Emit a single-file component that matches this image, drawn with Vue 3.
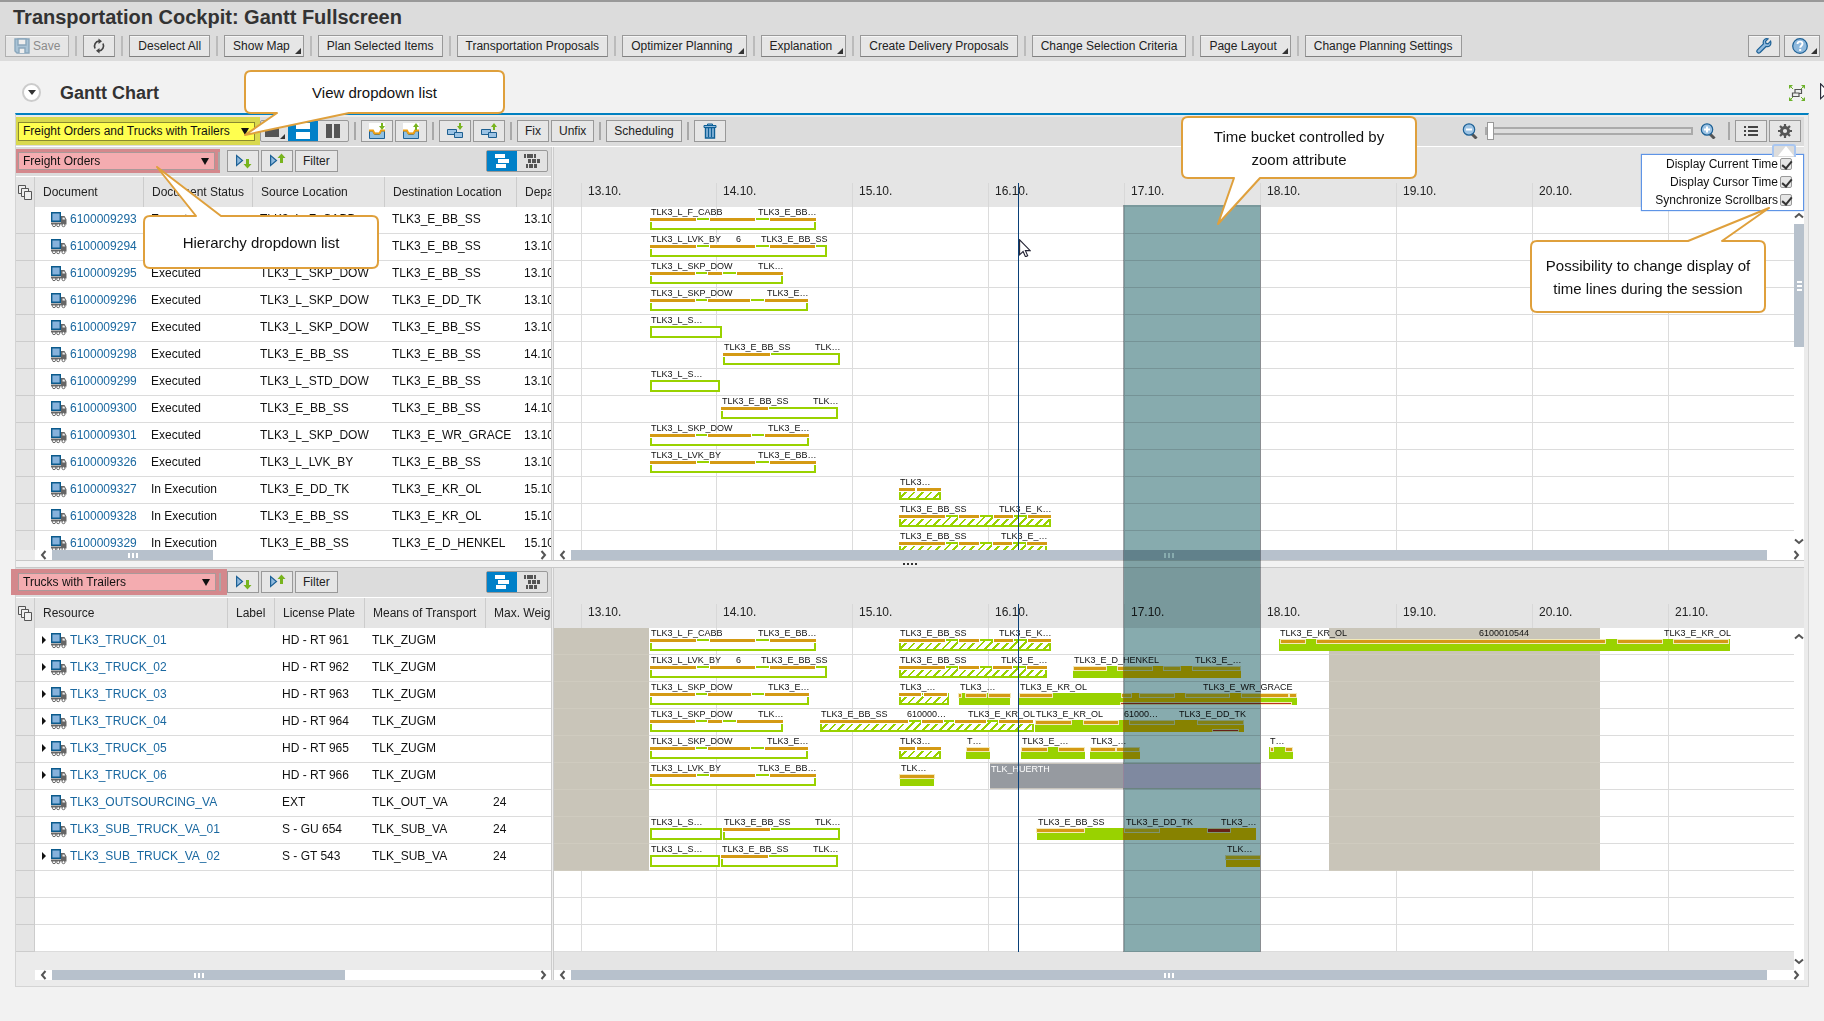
<script setup>
import { h, ref } from 'vue'

const glyphs = {
  save: '<g fill="none" stroke="#8aa7bc" stroke-width="1.4"><path d="M1 1h14v14H3l-2-2z" fill="#a9c3d6"/><path d="M4 1v6h8V1z" fill="#eee"/><path d="M5 15v-5h6v5" fill="#eee"/></g>',
  refresh: '<g fill="none" stroke="#444" stroke-width="1.7"><path d="M4 10.500A4.600 5 0 0 1 8 3.200"/><path d="M12 5.500A4.600 5 0 0 1 8 12.800"/></g><path d="M7.500 .500v5.500l3.500-2.700zM8.500 10v5.500L5 12.800z" fill="#444"/>',
  wrench: '<path d="M14.600 3.200l-2.600 2.600-2-.400-.500-2L12 .900C9.500 0 7 1.800 7.200 4.600l.2 1.200-6 6c-1.600 1.800.6 4.300 2.700 2.700l6-6c3 .900 5.600-1.600 4.500-5.300z" fill="#8fb9dd" stroke="#1d6196" stroke-width="1.200"/>',
  help: '<circle cx="8" cy="8" r="7.300" fill="#8fb9dd" stroke="#1d6196" stroke-width="1.200"/><path d="M5.500 6c.2-3.200 5-3 5-.2 0 1.900-2.300 1.900-2.300 4" fill="none" stroke="#fff" stroke-width="1.900"/><path d="M7.200 11h2v2h-2z" fill="#fff"/>',
  restore: '<g fill="none" stroke="#555" stroke-width="1.200"><path d="M6 4.500h6.500v4H6z" fill="#eee"/><path d="M3.500 8H10v3.500H3.500z" fill="#eee"/></g><path d="M0 0h4L0 4zM16 0v4l-4-4zM0 16v-4l4 4zM16 16h-4l4-4z" fill="#6cb22a"/><path d="M1 1l3 3M15 1l-3 3M1 15l3-3M15 15l-3-3" stroke="#6cb22a"/>',
  single: '<path d="M0 2h14v12H0z" fill="#555"/><path d="M20 16h-5l5-5z" fill="#333"/>',
  rows: '<path d="M1 0h14v6H1zM1 9h14v7H1z" fill="#fff"/>',
  cols: '<path d="M1 1h6v14H1zM9 1h6v14H9z" fill="#555"/>',
  trayin: '<path d="M0 0h16v9H0z" fill="#fff"/><path d="M.5 8v7.500h15V8h-3l-2 3.500h-5L3.500 8z" fill="#8fc0e2" stroke="#1d6196"/><path d="M0 7.500h4l1.500 3h5l1.500-3h4" fill="none" stroke="#f0a010" stroke-width="2"/><path d="M12 0h2v3h2l-3 4-3-4h2z" fill="#78b41e"/>',
  trayout: '<path d="M0 0h16v9H0z" fill="#fff"/><path d="M.5 8v7.500h15V8h-3l-2 3.500h-5L3.500 8z" fill="#8fc0e2" stroke="#1d6196"/><path d="M0 7.500h4l1.500 3h5l1.500-3h4" fill="none" stroke="#f0a010" stroke-width="2"/><path d="M12 7h2V4h2l-3-4-3 4h2z" fill="#78b41e"/>',
  linkin: '<path d="M.5 6.500h9v5h-9z" fill="#9cc3e4" stroke="#1d5f90"/><path d="M7.500 9.500h8v5h-8z" fill="#9cc3e4" stroke="#1d5f90"/><path d="M12 0h2v3h2l-3 4-3-4h2z" fill="#78b41e"/>',
  linkout: '<path d="M.5 6.500h9v5h-9z" fill="#9cc3e4" stroke="#1d5f90"/><path d="M7.500 9.500h8v5h-8z" fill="#9cc3e4" stroke="#1d5f90"/><path d="M12 7h2V4h2l-3-4-3 4h2z" fill="#78b41e"/>',
  trash: '<path d="M3.500 4.500h9V15h-9z" fill="#8fb9dd" stroke="#0d5f95" stroke-width="1.400"/><path d="M2 2.500h12v2H2zM5.500 1h5v1.500h-5z" fill="#8fb9dd" stroke="#0d5f95"/><path d="M6.500 5v9M9.500 5v9" stroke="#0d5f95" stroke-width="1.300"/>',
  zoomout: '<path d="M9.500 10.500l5 5" stroke="#555" stroke-width="3"/><circle cx="7" cy="6.500" r="5.700" fill="#9cc3e4" stroke="#1d6196" stroke-width="1.200"/><path d="M4 5.500h6v2H4z" fill="#fff"/>',
  zoomin: '<path d="M9.500 10.500l5 5" stroke="#555" stroke-width="3"/><circle cx="7" cy="6.500" r="5.700" fill="#9cc3e4" stroke="#1d6196" stroke-width="1.200"/><path d="M4 5.500h6v2H4zM6 3.500h2v6H6z" fill="#fff"/>',
  list: '<path d="M1 3h2v2H1zM5 3h10v2H5zM1 7h2v2H1zM5 7h10v2H5zM1 11h2v2H1zM5 11h10v2H5z" fill="#444"/>',
  gear: '<circle cx="8" cy="8" r="3.600" fill="none" stroke="#555" stroke-width="3"/><path d="M8 1v3M8 12v3M1 8h3M12 8h3M3 3l2.300 2.300M10.700 10.700L13 13M13 3l-2.300 2.300M5.300 10.700L3 13" stroke="#555" stroke-width="2.200"/>',
  expand: '<path d="M1.600 2.500v10L7.500 7.500z" fill="#8fb9dd" stroke="#1d6196" stroke-width="1.200"/><path d="M11 6h3v5h2.500l-4 4.500L8.500 11H11z" fill="#78b41e"/>',
  collapse: '<path d="M1.600 2.500v10L7.500 7.500z" fill="#8fb9dd" stroke="#1d6196" stroke-width="1.200"/><path d="M11 10h3V5h2.500l-4-4.500L8.500 5H11z" fill="#78b41e"/>',
  stagger: '<path d="M1 1h10v4H1zM4 6h11v4H4zM2 11h10v4H2z" fill="#fff"/>',
  brick: '<path d="M0 1h2v4H0zM3 1h6v4H3zM10 1h2v4h-2zM4 6h3v4H4zM8 6h4v4H8zM13 6h3v4h-3zM2 11h2v4H2zM5 11h4v4H5zM10 11h3v4h-3z" fill="#555"/>',
  copies: '<g fill="#eee" stroke="#555"><path d="M1.500 1.500h7v8h-7z"/><path d="M4.500 4.500h7v8h-7z"/><path d="M7.500 7.500h7v8h-7z"/></g>',
  truck: '<path d="M.7.700h8.600v8.600H.7z" fill="#86b2dc" stroke="#0b5a8c" stroke-width="1.400"/><path d="M0 10.500h10V4h3.500L15.500 7.500V12.500H0z" fill="#666"/><path d="M11.500 5.500h1.800l1 2h-2.800z" fill="#eee"/><g fill="#fff" stroke="#666"><circle cx="3" cy="13.200" r="1.500"/><circle cx="7.200" cy="13.200" r="1.500"/><circle cx="12.500" cy="13.200" r="1.500"/></g>',
  left: '<path d="M6.500 1L3 5l3.500 4" fill="none" stroke="#555" stroke-width="2"/>',
  right: '<path d="M3.500 1L7 5 3.500 9" fill="none" stroke="#555" stroke-width="2"/>',
  up: '<path d="M1 6.500L5 3l4 3.500" fill="none" stroke="#555" stroke-width="2"/>',
  down: '<path d="M1 3.500L5 7l4-3.500" fill="none" stroke="#555" stroke-width="2"/>',
  pointer: '<path d="M.6.800v15l3.500-3.300 2.400 5.300 2.200-1-2.300-5.200h4.800z" fill="#fff" stroke="#223" stroke-width="1.100"/>'
}
const Icon = (p) =>
  h('svg', { viewBox: `0 0 ${p.w || 16} ${p.t || 16}`, width: p.w || 16, height: p.t || 16, innerHTML: glyphs[p.name], 'aria-hidden': 'true' })
Icon.props = ['name', 'w', 't']

const actions = [
  { label: 'Deselect All' },
  { label: 'Show Map', menu: true },
  { label: 'Plan Selected Items' },
  { label: 'Transportation Proposals' },
  { label: 'Optimizer Planning', menu: true },
  { label: 'Explanation', menu: true },
  { label: 'Create Delivery Proposals' },
  { label: 'Change Selection Criteria' },
  { label: 'Page Layout', menu: true },
  { label: 'Change Planning Settings' }
]

const zoom = ref(0)
const options = ref([
  { id: 'opt-current', label: 'Display Current Time', on: true },
  { id: 'opt-cursor', label: 'Display Cursor Time', on: true },
  { id: 'opt-sync', label: 'Synchronize Scrollbars', on: true }
])

const days = ['13.10.', '14.10.', '15.10.', '16.10.', '17.10.', '18.10.', '19.10.', '20.10.', '21.10.'].map((label, i) => ({
  label,
  x: Math.floor(27 + i * 135.9)
}))

// A bar: start, width, fill kind, activity segments, captions, optional overload line
const bar = (x, w, kind, segs, texts, extra = {}) => ({ x, w, kind, segs, texts, ...extra })
const cabb = bar(96, 166, 'open', [[0, 46], [60, 105], [120, 166]], [[1, 'TLK3_L_F_CABB'], [108, 'TLK3_E_BB…']])
const lvkLong = bar(96, 177, 'open', [[0, 46], [60, 105], [120, 165]], [[1, 'TLK3_L_LVK_BY'], [86, '6'], [111, 'TLK3_E_BB_SS']])
const skpShort = bar(96, 133, 'open', [[0, 45], [58, 72], [87, 133]], [[1, 'TLK3_L_SKP_DOW'], [108, 'TLK…']])
const skpTk = bar(96, 158, 'open', [[0, 45], [58, 100], [115, 158]], [[1, 'TLK3_L_SKP_DOW'], [117, 'TLK3_E…']])
const plainA = bar(96, 72, 'open', [], [[1, 'TLK3_L_S…']])
const returnA = bar(169, 117, 'open', [[0, 47]], [[1, 'TLK3_E_BB_SS'], [92, 'TLK…']])
const plainB = bar(96, 70, 'open', [], [[1, 'TLK3_L_S…']])
const returnB = bar(167, 117, 'open', [[0, 47]], [[1, 'TLK3_E_BB_SS'], [92, 'TLK…']])
const grace = bar(96, 159, 'open', [[0, 45], [58, 101], [115, 159]], [[1, 'TLK3_L_SKP_DOW'], [118, 'TLK3_E…']])
const lvk = bar(96, 166, 'open', [[0, 46], [60, 105], [120, 166]], [[1, 'TLK3_L_LVK_BY'], [108, 'TLK3_E_BB…']])
const short27 = bar(345, 42, 'hatch', [[0, 16], [18, 42]], [[1, 'TLK3…']])
const hatch28 = bar(345, 152, 'hatch', [[0, 46], [60, 80], [95, 114], [129, 152]], [[1, 'TLK3_E_BB_SS'], [100, 'TLK3_E_K…']])
const hatch29 = bar(345, 148, 'hatch', [[0, 46], [60, 80], [94, 113], [128, 148]], [[1, 'TLK3_E_BB_SS'], [102, 'TLK3_E_…']])

const order = (id, status, from, to, dep, bars) => ({ name: id, cells: [status, from, to, dep], bars })
const truck = (name, plate, means, weight, open, bars) => ({ name, cells: ['', plate, means, weight], open, bars })
const blank = () => ({ name: '', cells: ['', '', '', ''], bars: [] })

const panes = [
  {
    id: 'orders',
    title: 'Freight Orders',
    cols: [109, 109, 132, 132, 120],
    heads: ['Document', 'Document Status', 'Source Location', 'Destination Location', 'Departure'],
    offdays: [],
    rows: [
      order('6100009293', 'Executed', 'TLK3_L_F_CABB', 'TLK3_E_BB_SS', '13.10.', [cabb]),
      order('6100009294', 'Executed', 'TLK3_L_LVK_BY', 'TLK3_E_BB_SS', '13.10.', [lvkLong]),
      order('6100009295', 'Executed', 'TLK3_L_SKP_DOW', 'TLK3_E_BB_SS', '13.10.', [skpShort]),
      order('6100009296', 'Executed', 'TLK3_L_SKP_DOW', 'TLK3_E_DD_TK', '13.10.', [skpTk]),
      order('6100009297', 'Executed', 'TLK3_L_SKP_DOW', 'TLK3_E_BB_SS', '13.10.', [plainA]),
      order('6100009298', 'Executed', 'TLK3_E_BB_SS', 'TLK3_E_BB_SS', '14.10.', [returnA]),
      order('6100009299', 'Executed', 'TLK3_L_STD_DOW', 'TLK3_E_BB_SS', '13.10.', [plainB]),
      order('6100009300', 'Executed', 'TLK3_E_BB_SS', 'TLK3_E_BB_SS', '14.10.', [returnB]),
      order('6100009301', 'Executed', 'TLK3_L_SKP_DOW', 'TLK3_E_WR_GRACE', '13.10.', [grace]),
      order('6100009326', 'Executed', 'TLK3_L_LVK_BY', 'TLK3_E_BB_SS', '13.10.', [lvk]),
      order('6100009327', 'In Execution', 'TLK3_E_DD_TK', 'TLK3_E_KR_OL', '15.10.', [short27]),
      order('6100009328', 'In Execution', 'TLK3_E_BB_SS', 'TLK3_E_KR_OL', '15.10.', [hatch28]),
      order('6100009329', 'In Execution', 'TLK3_E_BB_SS', 'TLK3_E_D_HENKEL', '15.10.', [hatch29])
    ]
  },
  {
    id: 'trucks',
    title: 'Trucks with Trailers',
    cols: [193, 47, 90, 121, 151],
    heads: ['Resource', 'Label', 'License Plate', 'Means of Transport', 'Max. Weight'],
    offdays: [[0, 95], [775, 271]],
    rows: [
      truck('TLK3_TRUCK_01', 'HD - RT 961', 'TLK_ZUGM', '', true, [
        cabb,
        hatch28,
        bar(725, 451, 'full', [[2, 26], [38, 326], [339, 383], [395, 449]], [[1, 'TLK3_E_KR_OL'], [200, '6100010544'], [385, 'TLK3_E_KR_OL']])
      ]),
      truck('TLK3_TRUCK_02', 'HD - RT 962', 'TLK_ZUGM', '', true, [
        lvkLong,
        hatch29,
        bar(519, 168, 'full', [[1, 33], [45, 79], [91, 107], [120, 167]], [[1, 'TLK3_E_D_HENKEL'], [122, 'TLK3_E_…']])
      ]),
      truck('TLK3_TRUCK_03', 'HD - RT 963', 'TLK_ZUGM', '', true, [
        grace,
        bar(345, 50, 'hatch', [[0, 22], [25, 48]], [[1, 'TLK3_…']]),
        bar(405, 51, 'full', [[0, 2], [7, 27], [30, 51]], [[1, 'TLK3_…']]),
        bar(465, 278, 'full', [[1, 33], [103, 112], [121, 155], [167, 210], [223, 269], [271, 277]], [[1, 'TLK3_E_KR_OL'], [184, 'TLK3_E_WR_GRACE']], { over: [102, 272] })
      ]),
      truck('TLK3_TRUCK_04', 'HD - RT 964', 'TLK_ZUGM', '', true, [
        skpShort,
        bar(266, 214, 'hatch', [[0, 88], [102, 123], [135, 166], [179, 213]], [[1, 'TLK3_E_BB_SS'], [87, '610000…'], [148, 'TLK3_E_KR_OL']]),
        bar(481, 209, 'full', [[1, 36], [49, 83], [95, 139], [163, 208]], [[1, 'TLK3_E_KR_OL'], [89, '61000…'], [144, 'TLK3_E_DD_TK']], { over: [178, 203] })
      ]),
      truck('TLK3_TRUCK_05', 'HD - RT 965', 'TLK_ZUGM', '', true, [
        skpTk,
        short27,
        bar(412, 24, 'full', [[1, 23]], [[1, 'T…']]),
        bar(467, 64, 'full', [[1, 26], [38, 63]], [[1, 'TLK3_E_…']]),
        bar(536, 50, 'full', [[1, 25], [27, 49]], [[1, 'TLK3_…']]),
        bar(715, 24, 'full', [[2, 4], [17, 23]], [[1, 'T…']])
      ]),
      truck('TLK3_TRUCK_06', 'HD - RT 966', 'TLK_ZUGM', '', true, [
        lvk,
        bar(346, 34, 'full', [[0, 34]], [[1, 'TLK…']]),
        bar(436, 271, 'block', [], [[1, 'TLK_HUERTH']])
      ]),
      truck('TLK3_OUTSOURCING_VA', 'EXT', 'TLK_OUT_VA', '24', false, []),
      truck('TLK3_SUB_TRUCK_VA_01', 'S - GU 654', 'TLK_SUB_VA', '24', false, [
        plainA,
        returnA,
        bar(483, 219, 'full', [[0, 47], [88, 122], [171, 193, 'late']], [[1, 'TLK3_E_BB_SS'], [89, 'TLK3_E_DD_TK'], [184, 'TLK3_…']])
      ]),
      truck('TLK3_SUB_TRUCK_VA_02', 'S - GT 543', 'TLK_SUB_VA', '24', true, [
        plainB,
        returnB,
        bar(672, 34, 'full', [[0, 34]], [[1, 'TLK…']])
      ]),
      blank(),
      blank(),
      blank()
    ]
  }
]

// Outline of a rounded box with a pointed tail on its top or bottom edge
function balloon(w, t, side, a, b, tip) {
  const r = 6
  const top = side === 'top' ? `L${a} 0L${tip[0]} ${tip[1]}L${b} 0` : ''
  const bottom = side === 'bottom' ? `L${b} ${t}L${tip[0]} ${tip[1]}L${a} ${t}` : ''
  return `M${r} 0${top}H${w - r}Q${w} 0 ${w} ${r}V${t - r}Q${w} ${t} ${w - r} ${t}${bottom}H${r}Q0 ${t} 0 ${t - r}V${r}Q0 0 ${r} 0Z`
}
const callouts = [
  { id: 'view', lines: ['View dropdown list'], w: 259, t: 42, path: balloon(259, 42, 'bottom', 32, 104, [0, 64]) },
  { id: 'hierarchy', lines: ['Hierarchy dropdown list'], w: 234, t: 52, path: balloon(234, 52, 'top', 52, 77, [13, -49]) },
  { id: 'bucket', lines: ['Time bucket controlled by', 'zoom attribute'], w: 234, t: 61, path: balloon(234, 61, 'bottom', 52, 78, [36, 107]) },
  { id: 'options', lines: ['Possibility to change display of', 'time lines during the session'], w: 234, t: 71, path: balloon(234, 71, 'top', 157, 191, [238, -33]) }
]
</script>

<template>
  <div class="page">
    <header class="top">
      <h1>Transportation Cockpit: Gantt Fullscreen</h1>
      <div class="actions">
        <button class="btn save" disabled><Icon name="save" />Save</button>
        <i class="sep"></i>
        <button class="btn icon" aria-label="Refresh"><Icon name="refresh" /></button>
        <template v-for="a in actions" :key="a.label">
          <i class="sep"></i>
          <button class="btn" :class="{ menu: a.menu }">{{ a.label }}</button>
        </template>
        <span class="grow"></span>
        <div class="tools">
          <button class="btn icon" aria-label="Personalize"><Icon name="wrench" /></button>
          <button class="btn icon menu helpbtn" aria-label="Help"><Icon name="help" /></button>
        </div>
      </div>
    </header>

    <main>
      <div class="section-head">
        <button class="fold" aria-label="Collapse section"></button>
        <h2>Gantt Chart</h2>
        <span class="grow"></span>
        <button class="bare" aria-label="Restore size"><Icon name="restore" /></button>
      </div>

      <section class="panel">
        <div class="toolbar">
          <div class="view-mark">
            <span class="drop">
              <select aria-label="View"><option>Freight Orders and Trucks with Trailers</option></select>
            </span>
          </div>
          <div class="group views">
            <button aria-label="Single view"><Icon name="single" :w="20" /></button>
            <button class="on" aria-label="Stacked view"><Icon name="rows" /></button>
            <button aria-label="Side by side view"><Icon name="cols" /></button>
          </div>
          <i class="sep"></i>
          <div class="pair">
            <button class="btn icon" aria-label="Load"><Icon name="trayin" /></button>
            <button class="btn icon" aria-label="Unload"><Icon name="trayout" /></button>
          </div>
          <i class="sep"></i>
          <div class="pair">
            <button class="btn icon" aria-label="Assign"><Icon name="linkin" /></button>
            <button class="btn icon" aria-label="Unassign"><Icon name="linkout" /></button>
          </div>
          <i class="sep"></i>
          <div class="pair">
            <button class="btn">Fix</button>
            <button class="btn">Unfix</button>
          </div>
          <i class="sep"></i>
          <button class="btn">Scheduling</button>
          <i class="sep"></i>
          <button class="btn icon" aria-label="Delete"><Icon name="trash" /></button>
          <span class="grow"></span>
          <div class="zoomer">
            <button class="bare" aria-label="Zoom out"><Icon name="zoomout" /></button>
            <input v-model="zoom" class="zoom" type="range" min="0" max="100" aria-label="Zoom" />
            <button class="bare" aria-label="Zoom in"><Icon name="zoomin" /></button>
          </div>
          <i class="sep"></i>
          <div class="pair">
            <button class="btn icon" aria-label="Legend"><Icon name="list" /></button>
            <button class="btn icon" aria-label="Settings"><Icon name="gear" /></button>
          </div>
          <div class="popup">
            <div v-for="o in options" :key="o.id" class="opt">
              <label :for="o.id">{{ o.label }}</label>
              <input :id="o.id" v-model="o.on" type="checkbox" />
            </div>
          </div>
        </div>

        <div class="stack">
          <template v-for="(p, pi) in panes" :key="p.id">
            <div v-if="pi" class="splitter"><i></i><i></i><i></i><i></i></div>
            <div class="pane" :class="p.id">
              <div class="side">
                <div class="toolbar slim">
                  <div class="hier-mark">
                    <span class="drop">
                      <select :aria-label="'Hierarchy ' + (pi + 1)"><option>{{ p.title }}</option></select>
                    </span>
                    <i class="sep"></i>
                  </div>
                  <div class="pair">
                    <button class="btn icon" aria-label="Expand all"><Icon name="expand" :w="17" /></button>
                    <button class="btn icon" aria-label="Collapse all"><Icon name="collapse" :w="17" /></button>
                    <button class="btn">Filter</button>
                  </div>
                  <span class="grow"></span>
                  <div class="group">
                    <button class="on" aria-label="Staggered rows"><Icon name="stagger" /></button>
                    <button aria-label="Compact rows"><Icon name="brick" /></button>
                  </div>
                </div>
                <div class="grid">
                  <table>
                    <colgroup>
                      <col class="mark-col" />
                      <col v-for="(c, i) in p.cols" :key="i" :style="{ width: c + 'px' }" />
                    </colgroup>
                    <thead>
                      <tr>
                        <th class="mark"><Icon name="copies" /></th>
                        <th v-for="t in p.heads" :key="t">{{ t }}</th>
                      </tr>
                    </thead>
                    <tbody>
                      <tr v-for="(r, ri) in p.rows" :key="ri">
                        <td class="mark"></td>
                        <td>
                          <div v-if="r.name" class="name">
                            <i class="twist" :class="{ shown: r.open }"></i>
                            <Icon name="truck" class="truck" />
                            <a href="#">{{ r.name }}</a>
                          </div>
                        </td>
                        <td v-for="(c, ci) in r.cells" :key="ci">{{ c }}</td>
                      </tr>
                    </tbody>
                  </table>
                </div>
                <div class="hscroll indent">
                  <button aria-label="Scroll left"><Icon name="left" :w="10" :t="10" /></button>
                  <div class="track"><div class="thumb part"><i></i><i></i><i></i></div></div>
                  <button aria-label="Scroll right"><Icon name="right" :w="10" :t="10" /></button>
                </div>
              </div>
              <div class="divider"></div>
              <div class="time">
                <div class="time-body">
                  <div class="chart">
                    <div class="days">
                      <span v-for="d in days" :key="d.label" class="day" :style="{ left: d.x + 'px' }">{{ pi || d.label !== '21.10.' ? d.label : '' }}</span>
                    </div>
                    <div class="lanes">
                      <i v-for="d in days" :key="d.label" class="tick" :style="{ left: d.x + 'px' }"></i>
                      <div v-for="(r, ri) in p.rows" :key="ri" class="lane" :class="{ used: r.name }">
                        <i v-for="o in p.offdays" :key="o[0]" class="off" :style="{ left: o[0] + 'px', width: o[1] + 'px' }"></i>
                        <div v-for="layer in ['base', 'bucketed']" :key="layer" :class="layer">
                          <div class="inner">
                            <div v-for="b in r.bars" :key="b.x" class="bar" :class="b.kind" :style="{ left: b.x + 'px', width: b.w + 'px' }">
                              <i v-for="s in b.segs" :key="s[0]" class="seg" :class="s[2]" :style="{ left: s[0] + 'px', width: s[1] - s[0] + 'px' }"></i>
                              <i v-if="b.over" class="over" :style="{ left: b.over[0] + 'px', width: b.over[1] - b.over[0] + 'px' }"></i>
                            </div>
                          </div>
                        </div>
                        <template v-for="b in r.bars" :key="b.x">
                          <span v-for="t in b.texts" :key="t[0]" class="cap" :class="{ light: b.kind === 'block' }" :style="{ left: b.x + t[0] + 'px' }">{{ t[1] }}</span>
                        </template>
                      </div>
                    </div>
                    <i class="now"></i>
                  </div>
                  <div class="vscroll">
                    <button aria-label="Scroll up"><Icon name="up" :w="10" :t="10" /></button>
                    <div v-if="!pi" class="vthumb"><i></i><i></i><i></i></div>
                    <span class="grow"></span>
                    <button aria-label="Scroll down"><Icon name="down" :w="10" :t="10" /></button>
                  </div>
                </div>
                <div class="hscroll">
                  <button aria-label="Scroll left"><Icon name="left" :w="10" :t="10" /></button>
                  <div class="track"><div class="thumb"><i></i><i></i><i></i></div></div>
                  <button aria-label="Scroll right"><Icon name="right" :w="10" :t="10" /></button>
                </div>
              </div>
            </div>
          </template>
          <div class="bucket"></div>
        </div>
      </section>
    </main>

    <div v-for="c in callouts" :key="c.id" class="callout" :class="'c-' + c.id" :style="{ width: c.w + 'px', height: c.t + 'px' }">
      <svg class="shape" :width="c.w" :height="c.t"><path :d="c.path" /></svg>
      <p><template v-for="(l, i) in c.lines" :key="l"><br v-if="i" />{{ l }}</template></p>
    </div>
    <Icon name="pointer" class="pointer p-chart" :w="12" :t="18" />
    <div class="edge"><Icon name="pointer" :w="12" :t="18" /></div>
  </div>
</template>

<style>
body { background: #f2f2f2; }
</style>

<style scoped>
* { box-sizing: border-box; }
.page { position: relative; overflow: hidden; min-height: 100vh; font: 12px/14px "Liberation Sans", Arial, sans-serif; color: #222; background: #f2f2f2; }
button, select, input { font: inherit; color: inherit; margin: 0; padding: 0; border-radius: 0; }
svg { display: block; flex: none; }
h1, h2, p { margin: 0; }
.grow { flex: 1; }

.top { border-top: 2px solid #999; background: #dcdcdc; height: 61px; padding: 4px 4px 0 5px; }
h1 { font-size: 20px; line-height: 23px; padding-left: 8px; margin-bottom: 6px; color: #333; }
.actions { display: flex; align-items: center; gap: 6px; }
.actions .sep { background: #bbb; height: 20px; }
.tools { display: flex; gap: 4px; }
.sep { width: 2px; height: 17px; background: #a8a8a8; flex: none; }
.btn { display: flex; align-items: center; justify-content: center; gap: 3px; height: 22px; padding: 0 8px; border: 1px solid #999; background: #e6e6e6; white-space: nowrap; position: relative; color: #222; }
.actions .btn { box-shadow: inset 0 1px #f6f6f6; border-bottom-color: #808080; }
.actions .btn.menu { padding-right: 13px; }
.btn.menu::after { content: ""; position: absolute; right: 2px; bottom: 2px; border-left: 6px solid transparent; border-bottom: 6px solid #333; }
.btn.icon { width: 32px; padding: 0; }
.actions .btn.helpbtn { width: 36px; padding-right: 4px; }
.btn.save { color: #8b8b8b; border-color: #b0b0b0; }
.bare { display: flex; align-items: center; justify-content: center; border: 0; background: none; }

main { padding: 0 15px 34px; }
.section-head { display: flex; align-items: center; height: 52px; padding: 11px 4px 0 7px; }
.fold { width: 19px; height: 19px; border: 2px solid #ccc; border-radius: 50%; background: #fff; display: flex; align-items: center; justify-content: center; margin-right: 19px; }
.fold::after { content: ""; border: 4px solid transparent; border-top: 5px solid #333; border-bottom: 0; }
h2 { font-size: 18px; line-height: 22px; color: #333; }

.panel { border: 1px solid #d4d4d4; border-top: 2px solid #0080c0; background: #ebebeb; padding: 2px 4px 6px 0; }
.toolbar { position: relative; display: flex; align-items: center; gap: 5px; height: 30px; background: #dcdcdc; border-bottom: 1px solid #fff; padding: 0 3px 1px 0; }
.toolbar .btn { padding: 0 7px; }
.toolbar .btn.icon { padding: 0; }
.toolbar .sep { height: 18px; }
.pair { display: flex; gap: 2px; }
.view-mark { display: flex; align-items: center; align-self: stretch; width: 244px; padding: 0 5px 0 2px; background: #d9d94f; margin-right: -5px; }
.view-mark .drop { flex: 1; }
.drop { position: relative; display: flex; }
.drop::after { content: ""; position: absolute; right: 6px; top: 6px; border: 4px solid transparent; border-top: 7px solid #111; border-bottom: 0; pointer-events: none; }
select { appearance: none; width: 100%; height: 19px; padding: 0 4px; border: 1px solid #8a8a30; background: #ffff4f; color: #111; border-radius: 0; }
.group { display: flex; height: 22px; border: 1px solid #999; border-radius: 2px; background: #e2e2e2; }
.group button { width: 30px; border: 0; background: none; display: flex; align-items: center; justify-content: center; }
.group button.on { background: #0080c8; }
.group.views button:first-child { width: 27px; }
.zoomer { display: flex; align-items: center; }
.zoomer .bare { width: 30px; height: 22px; }
.zoom { appearance: none; width: 208px; height: 18px; background: none; }
.zoom::-webkit-slider-runnable-track { height: 8px; border: 2px solid #aaa; background: #ddd; }
.zoom::-webkit-slider-thumb { appearance: none; width: 7px; height: 18px; margin-top: -7px; background: #fff; border: 1px solid #999; }

.popup { position: absolute; z-index: 5; top: 37px; right: 0; width: 163px; padding: 0 11px 1px 0; border: 1px solid #5e94e6; background: #fff; box-shadow: 0 0 1px #5e94e6; }
.popup::before { content: ""; position: absolute; right: 7px; top: -11px; width: 20px; height: 11px; border: 2px solid #a9c6f0; border-bottom: 0; border-radius: 3px 3px 0 0; background: #dcdcdc; }
.popup::after { content: ""; position: absolute; right: 9px; top: -9px; border: 8px solid transparent; border-top: 0; border-bottom: 10px solid #fff; }
.opt { display: flex; justify-content: flex-end; align-items: center; gap: 2px; height: 18px; color: #111; }
.opt input { appearance: none; width: 12px; height: 12px; border: 1px solid #999; border-radius: 2px; background: #e6e6e6; position: relative; }
.opt input:checked::after { content: ""; position: absolute; left: 3px; top: 0; width: 4px; height: 8px; border: solid #333; border-width: 0 2px 2px 0; transform: rotate(40deg); }

.stack { position: relative; isolation: isolate; }
.pane { display: flex; }
.side { width: 535px; flex: none; display: flex; flex-direction: column; }
.slim { gap: 0; }
.hier-mark { display: flex; align-items: center; height: 24px; width: 204px; margin-right: 7px; padding-left: 2px; background: #d4888c; }
.hier-mark .drop { width: 198px; }
.hier-mark select { background: #f4acb0; border-color: #a99; height: 18px; }
.hier-mark .sep { margin-left: 3px; }
.trucks .hier-mark { width: 216px; height: 26px; margin: 0 0 0 -5px; padding-left: 7px; }
.divider { width: 3px; flex: none; background: #eee; border: solid #ccc; border-width: 0 1px; }
.grid { overflow: hidden; height: 373px; }
.trucks .grid { height: 372px; }
table { table-layout: fixed; border-collapse: separate; border-spacing: 0; width: 621px; }
.mark-col { width: 19px; }
th { height: 30px; padding: 0 0 1px 7px; background: #e5e5e5; border-right: 1px solid #ccc; text-align: left; font-weight: normal; white-space: nowrap; color: #222; }
th + th, td + td { padding-left: 8px; }
td { height: 27px; padding: 0 0 2px 7px; background: #fff; border-bottom: 1px solid #dcdcdc; white-space: nowrap; color: #111; }
td + td { padding-left: 7px; }
td.mark, th.mark { background: #e5e5e5; border-right: 1px solid #ccc; padding: 0 0 0 1px; }
td.mark { border-bottom-color: #ccc; }
.name { display: flex; align-items: center; }
.name a { color: #1a68a0; text-decoration: none; }
.truck { margin: 1px 3px 0 0; }
.twist { width: 9px; height: 8px; }
.twist.shown::before { content: ""; display: block; border: 4px solid transparent; border-left: 4px solid #111; border-right: 0; width: 0; }

.hscroll { display: flex; align-items: center; height: 10px; background: #fff; }
.hscroll.indent { margin-left: 19px; }
.hscroll button, .vscroll button { border: 0; background: none; display: flex; }
.hscroll button { width: 17px; justify-content: center; }
.track { flex: 1; display: flex; height: 10px; }
.thumb { flex: 1; display: flex; align-items: center; justify-content: center; gap: 2px; background: #b7c1cc; }
.time .track { margin-right: 20px; }
.time .hscroll button:last-child { margin-right: 0; }
.thumb i { width: 2px; height: 5px; background: #fff; }
.orders .part { flex: none; width: 161px; }
.trucks .part { flex: none; width: 293px; }

.time { flex: 1; min-width: 0; display: flex; flex-direction: column; background: #e5e5e5; }
.time .hscroll { padding-right: 0; }
.time-body { display: flex; flex: 1; position: relative; }
.chart { flex: 1; position: relative; min-width: 0; height: 403px; overflow: hidden; }
.trucks .chart { height: 384px; }
.days { position: relative; height: 60px; }
.day { position: absolute; bottom: 0; height: 24px; padding: 1px 0 0 6px; border-left: 1px solid #d8d8d8; color: #222; }
.lanes { position: relative; background: #fff; }
.tick { position: absolute; top: 0; bottom: 0; width: 1px; background: #dcdcdc; }
.lane { position: relative; height: 27px; border-bottom: 1px solid #dcdcdc; }
.off { display: none; position: absolute; top: 0; height: 27px; background: #c9c5b9; border-bottom: 1px solid #cfcbbf; }
.used .off { display: block; }
.base, .bucketed { --fill: #99d200; --act: #d49a14; --halo: #f3eab8; --plain: #969aa0; position: absolute; top: 0; height: 26px; left: 0; right: 0; overflow: hidden; }
.bucketed { --fill: #ffc200; --act: #f5c020; --halo: #f0dfa8; --plain: #f0cdea; left: 569px; right: auto; width: 138px; }
.inner { position: absolute; inset: 0; }
.bucketed .inner { left: -569px; right: auto; width: 1240px; }
.bar { position: absolute; top: 11px; height: 12px; border: 2px solid var(--fill); background: #fff; }
.bar.hatch { background: repeating-linear-gradient(135deg, #fff 0 4px, var(--fill) 4px 6px); }
.bar.full { background: var(--fill); }
.bar.block { top: 0; height: 26px; background: var(--plain); border: solid #c8c4bc; border-width: 1px 0; }
.seg { position: absolute; top: -2px; height: 3px; margin-left: -2px; background: var(--act); box-shadow: 0 0 0 1px #fff; }
.full .seg { top: -1px; box-shadow: 0 0 0 1px var(--halo); }
.seg.late { background: #c03020; }
.over { position: absolute; bottom: -1px; height: 1px; margin-left: -2px; background: #c03020; box-shadow: 0 0 0 1px var(--halo); }
.cap { position: absolute; top: 0; font-size: 9px; line-height: 11px; white-space: nowrap; color: #111; }
.cap.light { color: #fff; line-height: 13px; }
.now { position: absolute; left: 464px; top: 36px; bottom: 0; width: 1px; background: #0a4078; }
.vscroll { width: 10px; display: flex; flex-direction: column; margin-top: 60px; padding: 4px 0; background: #fff; }
.vthumb { height: 123px; margin-top: 3px; background: #b7c1cc; display: flex; flex-direction: column; align-items: center; justify-content: center; gap: 2px; }
.vthumb i { width: 5px; height: 2px; background: #fff; }

.splitter { height: 8px; border: solid #c8c8c8; border-width: 1px 0; background: #f2f2f2; display: flex; align-items: center; justify-content: center; gap: 2px; }
.splitter i { width: 2px; height: 2px; background: #333; }
.bucket { position: absolute; left: 1107px; top: 58px; bottom: 28px; width: 138px; border: solid #a0a4a8; border-width: 0 1px; background: #87abae; mix-blend-mode: multiply; }

.callout { position: absolute; z-index: 10; display: flex; align-items: center; justify-content: center; }
.callout p { position: relative; font-size: 15px; line-height: 23px; text-align: center; color: #111; white-space: nowrap; }
.shape { position: absolute; inset: 0; overflow: visible; }
.shape path { fill: #fff; stroke: #dfa03c; stroke-width: 2; stroke-linejoin: round; }
.c-view { left: 245px; top: 71px; }
.c-hierarchy { left: 144px; top: 216px; }
.c-bucket { left: 1182px; top: 117px; }
.c-options { left: 1531px; top: 241px; }
.pointer { position: absolute; z-index: 10; }
.p-chart { left: 1019px; top: 239px; }
.edge { position: absolute; right: 0; top: 83px; width: 4px; overflow: hidden; }
</style>
